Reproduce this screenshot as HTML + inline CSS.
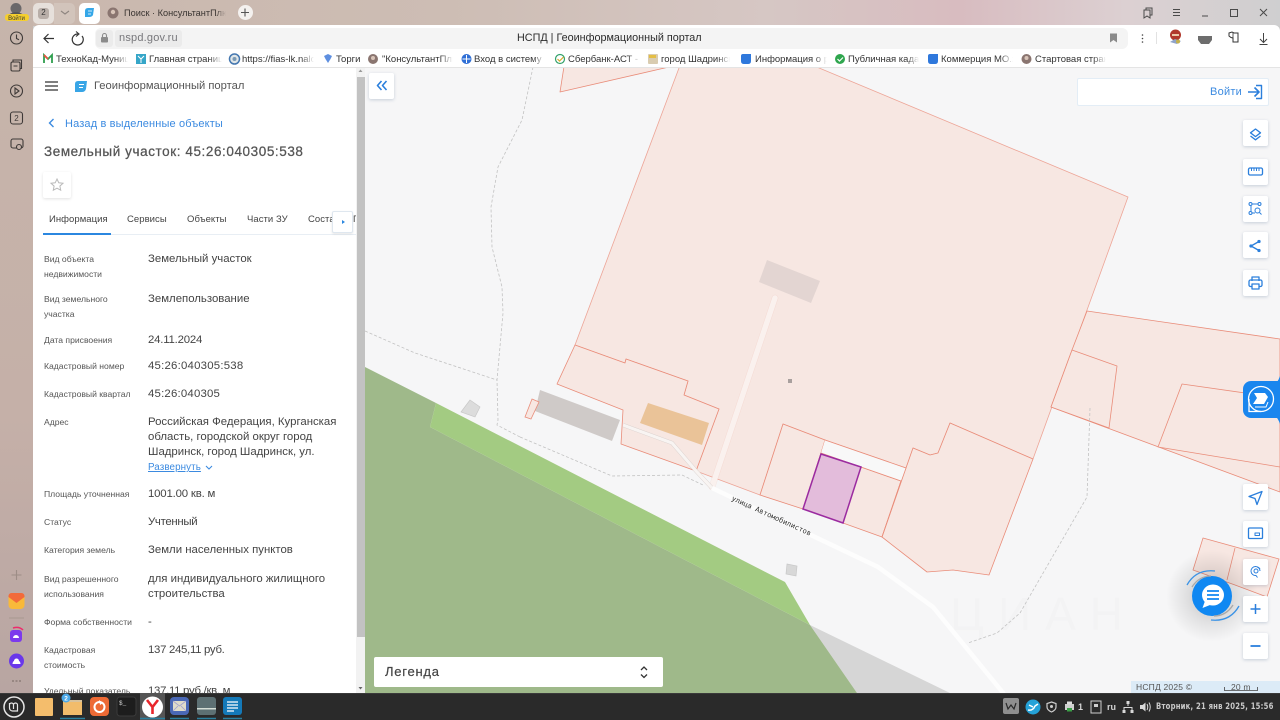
<!DOCTYPE html>
<html lang="ru"><head><meta charset="utf-8"><title>НСПД</title>
<style>
html,body{margin:0;padding:0;width:1280px;height:720px;overflow:hidden;background:#ccc}
body{font-family:"Liberation Sans","DejaVu Sans",sans-serif;position:relative}
div{box-sizing:border-box}
.a{position:absolute}
.t{position:absolute;white-space:nowrap;line-height:14px;height:14px}
.bm{font-size:9.5px;color:#333;overflow:hidden;-webkit-mask-image:linear-gradient(90deg,#000 82%,transparent);mask-image:linear-gradient(90deg,#000 82%,transparent)}
.l{font-size:8.6px;color:#555;letter-spacing:0}
.v{font-size:11.4px;color:#444;letter-spacing:0;left:148px}
.tab{font-size:9.5px;color:#444;letter-spacing:.05px}
.btn{position:absolute;left:1243px;width:25px;height:26px;background:#fff;border-radius:2px;box-shadow:0 1px 3px rgba(60,90,130,.25)}
svg{position:absolute;left:0;top:0}
</style></head><body>
<!-- chrome bg -->
<div class="a" style="left:0;top:0;width:1280px;height:26px;background:linear-gradient(90deg,#c9b7ad 0,#cdbdb4 35%,#d6c7c4 60%,#d8bcc0 75%,#dcd0d2 88%,#cfcfd0 100%)"></div>
<div class="a" style="left:0;top:0;width:33px;height:693px;background:linear-gradient(180deg,#c6b5ab 0,#c5b0a8 60%,#b8a5a2 100%)"></div>
<div class="a" style="left:33px;top:25px;width:1247px;height:43px;background:#fff;border-radius:6px 6px 0 0"></div>
<div class="a" style="left:95px;top:28px;width:1033px;height:21px;background:#f4f4f4;border-radius:6px"></div>
<div class="a" style="left:96px;top:30px;width:17px;height:17px;background:#ebebeb;border-radius:3px"></div>
<div class="a" style="left:115px;top:30px;width:67px;height:17px;background:#ebebeb;border-radius:3px"></div>
<div class="a" style="left:33px;top:67px;width:1247px;height:1px;background:#e4e4e4"></div>

<!-- map -->
<svg width="1280" height="720" viewBox="0 0 1280 720" style="left:0;top:0">
<defs><clipPath id="m"><rect x="365" y="68" width="915" height="625"/></clipPath>
<radialGradient id="sh"><stop offset="0" stop-color="#000" stop-opacity=".22"/><stop offset=".6" stop-color="#000" stop-opacity=".08"/><stop offset="1" stop-color="#000" stop-opacity="0"/></radialGradient></defs>
<g clip-path="url(#m)">
<rect x="365" y="68" width="915" height="625" fill="#f6f6f7"/>
<text x="950" y="630" font-family="'Liberation Sans',sans-serif" font-size="46" letter-spacing="14" fill="#f3f3f4">ЦИАН</text>
<polygon points="810,625 950,693 857,693" fill="#d6d6d6"/>
<polygon points="365,367 436,403 430,427 810,625 857,693 365,693" fill="#9fb98a"/>
<polygon points="436,403 785,582 810,625 430,427" fill="#a3cb82"/>
<g fill="#f7e7e2" stroke="#e98c79" stroke-width=".8" stroke-linejoin="round">
<polygon points="565,60 560,92 682,64"/>
<polygon points="682,60 800,60 1128,197 1033,459 950,423 938,453 930,455 913,448 906,468 825,440 783,424 760,495 696,471 719,409 684,395 688,381 626,359 625,363 575,345" stroke="#eda597" />
<polygon points="575,345 625,363 626,359 688,381 684,395 719,409 696,471 621,444 623,410 557,384"/>
<polygon points="783,424 825,440 821,453 803,509 760,495"/>
<polygon points="821,453 901,481 882,537 843,523 803,509"/>
<polygon points="1087,311 1280,339 1280,492 1051,407 1072,350"/>
<polygon points="1072,350 1117,366 1109,428 1051,407"/>
<polygon points="1182,384 1280,398 1280,467 1158,447"/>
<polygon points="913,448 930,455 938,453 950,423 1033,459 989,575 953,570 927,572 882,537 901,481 906,468"/>
<polygon points="1203,538 1279,559 1267,597 1235,585 1193,570"/>
<line x1="1235" y1="548" x2="1227" y2="580"/>
</g>
<polygon points="825,440 906,468 901,481 821,453" fill="#f8f8f8"/>
<polyline points="825,440 906,468" fill="none" stroke="#e98c79" stroke-width=".8"/>
<polyline points="821,453 901,481" fill="none" stroke="#e98c79" stroke-width=".8"/>
<line x1="906" y1="468" x2="882" y2="537" stroke="#e98c79" stroke-width=".8"/>
<!-- roads -->
<polyline points="775,298 712,487" fill="none" stroke="#e9a99c" stroke-width="6.500" stroke-opacity=".2" stroke-linecap="round"/>
<polyline points="775,298 712,487" fill="none" stroke="#faf1ee" stroke-width="5.500" stroke-linecap="round"/>
<polyline points="623,425 672,443 697,472 712,488" fill="none" stroke="#d8cfcc" stroke-width="4"/>
<polyline points="623,425 672,443 697,472 712,488" fill="none" stroke="#f8f4f2" stroke-width="3.200"/>
<polyline points="712,488 878,567 933,607 1004,694" fill="none" stroke="#fdfdfd" stroke-width="4.500"/>
<!-- buildings -->
<polygon points="540,390 620,420 612,441 535,411" fill="#cfcac8"/>
<polygon points="648,403 709,423 702,445 640,423" fill="#eac398"/>
<polygon points="767,260 820,281 811,303 759,282" fill="#e3d5d2"/>
<polygon points="470,400 480,407 475,417 461,412" fill="#dcdcdc" stroke="#c8c8c8" stroke-width=".7"/>
<polygon points="787,564 797,566 796,576 786,574" fill="#d8d8d8" stroke="#c8c8c8" stroke-width=".7"/>
<polygon points="532,399 539,402 531,419 525,417" fill="#f7e7e2" stroke="#e98c79" stroke-width=".8"/>
<rect x="788" y="379" width="4" height="4" fill="#a9a09e"/>
<!-- selected -->
<polygon points="821,454 861,467 843,523 803,509" fill="#e3bcdb" stroke="#9b2ba0" stroke-width="1.500"/>
<!-- dashed -->
<g fill="none" stroke="#c2c2c2" stroke-width=".8" stroke-dasharray="3 2">
<polyline points="533,67 522,120 498,167 491,207 492,247 502,287 503,313 497,380 498,420 497,425 520,437"/>
<polyline points="365,331 415,353 497,380"/>
<polyline points="520,437 612,476 682,475 703,485"/>
<polyline points="1090,408 1087,497 1020,613 997,633 968,643"/>
</g>
<text x="0" y="0" transform="translate(731,500) rotate(24.5)" font-family="'DejaVu Sans Mono',monospace" font-size="7.200" fill="#333">улица Автомобилистов</text>
<circle cx="1212" cy="596" r="46" fill="url(#sh)"/>
<rect x="1131" y="681" width="149" height="12" fill="#dcebf7"/>
</g>
</svg>

<!-- panel -->
<div class="a" style="left:33px;top:68px;width:323px;height:625px;background:#fff"></div>
<div class="a" style="left:356px;top:68px;width:9px;height:625px;background:#f2f2f2"></div>
<div class="a" style="left:357px;top:77px;width:8px;height:560px;background:#c2c2c2"></div>
<div class="a" style="left:43px;top:234px;width:313px;height:1px;background:#e8eef4"></div>
<div class="a" style="left:43px;top:233px;width:68px;height:2px;background:#2b87e0"></div>
<div class="a" style="left:43px;top:172px;width:28px;height:26px;background:#fff;box-shadow:0 1px 3px rgba(0,0,0,.12);border-radius:2px"></div>

<div class="t" style="left:94px;top:79px;font-size:11.200px;color:#555;letter-spacing:0">Геоинформационный портал</div>
<div class="t" style="left:65px;top:117px;font-size:11px;color:#3b8ae0;letter-spacing:.15px">Назад в выделенные объекты</div>
<div class="t" style="left:44px;top:145px;font-size:13.500px;color:#555;letter-spacing:.58px;-webkit-text-stroke:.25px #555">Земельный участок: 45:26:040305:538</div>
<div class="t tab" style="left:49px;top:213px">Информация</div>
<div class="t tab" style="left:127px;top:213px">Сервисы</div>
<div class="t tab" style="left:187px;top:213px">Объекты</div>
<div class="t tab" style="left:247px;top:213px">Части ЗУ</div>
<div class="t tab" style="left:308px;top:213px;width:24px;overflow:hidden">Состав</div>
<div class="t tab" style="left:353px;top:213px;width:3px;overflow:hidden">П</div>
<div class="a" style="left:332px;top:211px;width:21px;height:22px;background:#fff;border:1px solid #dfe7ef;border-radius:2px;box-shadow:0 1px 2px rgba(0,0,0,.1)"></div>

<div class="t l" style="left:44px;top:252px">Вид объекта</div>
<div class="t l" style="left:44px;top:267px">недвижимости</div>
<div class="t l" style="left:44px;top:292px">Вид земельного</div>
<div class="t l" style="left:44px;top:307px">участка</div>
<div class="t l" style="left:44px;top:333px">Дата присвоения</div>
<div class="t l" style="left:44px;top:359px">Кадастровый номер</div>
<div class="t l" style="left:44px;top:387px">Кадастровый квартал</div>
<div class="t l" style="left:44px;top:415px">Адрес</div>
<div class="t l" style="left:44px;top:487px">Площадь уточненная</div>
<div class="t l" style="left:44px;top:515px">Статус</div>
<div class="t l" style="left:44px;top:543px">Категория земель</div>
<div class="t l" style="left:44px;top:572px">Вид разрешенного</div>
<div class="t l" style="left:44px;top:587px">использования</div>
<div class="t l" style="left:44px;top:615px">Форма собственности</div>
<div class="t l" style="left:44px;top:643px">Кадастровая</div>
<div class="t l" style="left:44px;top:658px">стоимость</div>
<div class="t l" style="left:44px;top:684px">Удельный показатель</div>

<div class="t v" style="top:252px">Земельный участок</div>
<div class="t v" style="top:292px">Землепользование</div>
<div class="t v" style="top:333px;letter-spacing:-.2px">24.11.2024</div>
<div class="t v" style="top:359px;letter-spacing:.22px">45:26:040305:538</div>
<div class="t v" style="top:387px;letter-spacing:.2px">45:26:040305</div>
<div class="t v" style="top:415px">Российская Федерация, Курганская</div>
<div class="t v" style="top:430px">область, городской округ город</div>
<div class="t v" style="top:445px">Шадринск, город Шадринск, ул.</div>
<div class="t" style="left:148px;top:461px;font-size:9.800px;color:#3b8ae0;text-decoration:underline;letter-spacing:.1px">Развернуть</div>
<div class="t v" style="top:487px;letter-spacing:-.18px">1001.00 кв. м</div>
<div class="t v" style="top:515px;letter-spacing:-.3px">Учтенный</div>
<div class="t v" style="top:543px">Земли населенных пунктов</div>
<div class="t v" style="top:572px">для индивидуального жилищного</div>
<div class="t v" style="top:587px">строительства</div>
<div class="t v" style="top:615px">-</div>
<div class="t v" style="top:643px;letter-spacing:-.3px">137 245,11 руб.</div>
<div class="t v" style="top:684px;letter-spacing:-.3px">137,11 руб./кв. м</div>

<!-- map overlays -->
<div class="a" style="left:369px;top:73px;width:25px;height:26px;background:#fff;border-radius:2px;box-shadow:0 1px 3px rgba(60,90,130,.25)"></div>
<div class="a" style="left:1077px;top:78px;width:192px;height:28px;background:#fff;border:1px solid #e3edf6;border-radius:2px"></div>
<div class="t" style="left:1210px;top:85px;font-size:11px;color:#3b8ae0;letter-spacing:.25px">Войти</div>
<div class="btn" style="top:120px"></div><div class="btn" style="top:159px"></div><div class="btn" style="top:196px"></div><div class="btn" style="top:232px"></div><div class="btn" style="top:270px"></div>
<div class="btn" style="top:484px"></div><div class="btn" style="top:521px"></div><div class="btn" style="top:559px"></div><div class="btn" style="top:596px"></div><div class="btn" style="top:633px"></div>
<div class="a" style="left:374px;top:657px;width:289px;height:30px;background:#fff;border-radius:2px"></div>
<div class="t" style="left:385px;top:665px;font-size:13px;color:#444;letter-spacing:.75px;-webkit-text-stroke:.2px #444">Легенда</div>
<div class="a" style="left:1243px;top:381px;width:37px;height:37px;background:#1a86ee;border-radius:8px 0 0 8px"></div>
<div class="a" style="left:1192px;top:576px;width:40px;height:40px;background:#1088f2;border-radius:50%"></div>
<div class="t" style="left:1136px;top:680px;font-size:8.500px;color:#555;letter-spacing:.2px">НСПД 2025 ©</div>
<div class="t" style="left:1231px;top:680px;font-size:8.500px;color:#555;letter-spacing:.2px">20 m</div>

<!-- tabs / toolbar text -->
<div class="a" style="left:33px;top:3px;width:21px;height:21px;background:#e6e0db;border-radius:5px"></div>
<div class="a" style="left:54px;top:3px;width:21px;height:21px;background:#d2c4bb;border-radius:0 5px 5px 0"></div>
<div class="a" style="left:79px;top:3px;width:21px;height:21px;background:#fff;border-radius:5px"></div>
<div class="a" style="left:238px;top:5px;width:15px;height:15px;background:#f4f1ef;border-radius:50%"></div>
<div class="a" style="left:38px;top:8px;width:11px;height:11px;background:#b8aea8;border-radius:3px"></div>
<div class="t" style="left:38px;top:6px;width:11px;text-align:center;font-size:8px;color:#333">2</div>
<div class="t" style="left:124px;top:6px;width:102px;font-size:9.200px;color:#3a3532;letter-spacing:0;overflow:hidden;-webkit-mask-image:linear-gradient(90deg,#000 90%,transparent);mask-image:linear-gradient(90deg,#000 90%,transparent)">Поиск · КонсультантПлюс</div>
<div class="t" style="left:119px;top:31px;font-size:11px;color:#77777b;letter-spacing:.2px">nspd.gov.ru</div>
<div class="t" style="left:517px;top:31px;font-size:10.800px;color:#2c2c2c;letter-spacing:0">НСПД | Геоинформационный портал</div>

<div class="t bm" style="left:56px;top:53px;width:72px">ТехноКад-Муниципальный</div>
<div class="t bm" style="left:149px;top:53px;width:73px">Главная страница сайта</div>
<div class="t bm" style="left:242px;top:53px;width:72px">https://fias-lk.nalog.ru</div>
<div class="t bm" style="left:336px;top:53px;width:26px;-webkit-mask-image:none;mask-image:none">Торги</div>
<div class="t bm" style="left:382px;top:53px;width:71px">"КонсультантПлюс"</div>
<div class="t bm" style="left:474px;top:53px;width:71px">Вход в систему :: Портал</div>
<div class="t bm" style="left:568px;top:53px;width:72px">Сбербанк-АСТ - Электрон</div>
<div class="t bm" style="left:661px;top:53px;width:69px">город Шадринск Курган</div>
<div class="t bm" style="left:755px;top:53px;width:72px">Информация о рынке</div>
<div class="t bm" style="left:848px;top:53px;width:71px">Публичная кадастровая</div>
<div class="t bm" style="left:941px;top:53px;width:72px">Коммерция МО.xlsx файл</div>
<div class="t bm" style="left:1035px;top:53px;width:71px">Стартовая страница</div>

<!-- taskbar -->
<div class="a" style="left:0;top:693px;width:1280px;height:27px;background:#2a2a2a;border-top:1px solid #3a3a3a"></div>
<div class="t" style="left:1156px;top:700px;font-size:8.600px;color:#c9c9c9;letter-spacing:.26px;font-family:'DejaVu Sans',sans-serif;font-weight:bold;transform-origin:left;transform:scaleX(.8)">Вторник, 21 янв 2025, 15:56</div>
<div class="t" style="left:1107px;top:700px;font-size:9px;color:#d5d5d5;font-weight:bold">ru</div>
<div class="t" style="left:1078px;top:700px;font-size:9px;color:#d5d5d5;font-weight:bold">1</div>

<!-- icons overlay -->
<svg width="1280" height="720" viewBox="0 0 1280 720" fill="none">
<!-- profile -->
<circle cx="16" cy="8.500" r="5.500" fill="#6a686a"/><path d="M8 16c2-5 14-5 16 0z" fill="#555"/>
<rect x="5" y="14" width="24" height="7" rx="3" fill="#f5cf2e"/>
<text x="16.500" y="20" font-family="Liberation Sans" font-size="6" fill="#333" text-anchor="middle">Войти</text>
<!-- rail icons -->
<g stroke="#3f3a38" stroke-width="1.100">
<circle cx="16.500" cy="38" r="6"/><path d="M16.500 34.500v4l2.500 1.200"/>
<rect x="11" y="62" width="9" height="9" rx="1.500"/><path d="M13 62v-2h8.500v8.500h-1.500M13.500 66h4"/>
<circle cx="16.500" cy="91" r="6"/><path d="M15 88l4 3-4 3z"/>
<rect x="10.500" y="112" width="12" height="12" rx="2.500"/>
<rect x="11" y="139" width="12" height="9" rx="2"/><circle cx="19" cy="147" r="2.500" fill="#c5b2a9"/>
</g>
<text x="16.500" y="121" font-family="Liberation Sans" font-size="8" fill="#3f3a38" text-anchor="middle">2</text>
<path d="M16.500 570v10M11.500 575h10" stroke="#9d8d86" stroke-width="1.100"/>
<rect x="8.500" y="593" width="16" height="16" rx="4" fill="#f9b93a"/><path d="M8.500 597l8 6 8-6v-1a3 3 0 0 0-3-3h-10a3 3 0 0 0-3 3z" fill="#f26a3a"/>
<line x1="9" y1="618" x2="24" y2="618" stroke="#a89790"/>
<rect x="10" y="630" width="12" height="12" rx="3" fill="#7c3aed"/><path d="M13 638a3 3 0 0 1 6 0z" fill="#fff"/><path d="M13 628q6-2 10 2" stroke="#ee2b6c" stroke-width="1.500"/>
<circle cx="16.500" cy="661" r="7.500" fill="#6a38ea"/><path d="M12.500 664a4 4 0 0 1 8 0z" fill="#fff"/><circle cx="16.500" cy="661" r="2.500" fill="#fff"/>
<path d="M12 681h2M15.500 681h2M19 681h2" stroke="#8c7d77" stroke-width="1.500"/>
<!-- tabs -->
<path d="M61 11l4 3 4-3" stroke="#8e8580" stroke-width="1.100"/>
<path d="M85 11q0-3 3-3h6l-1 7q-1 2-4 2h-4z" fill="#35a7e8"/><path d="M88 11h4M88 14h3" stroke="#fff" stroke-width=".8"/>
<circle cx="113" cy="13" r="5.500" fill="#8a7570"/><circle cx="113" cy="12" r="2.200" fill="#d8c4b8"/>
<path d="M245 8.500v8M241 12.500h8" stroke="#555" stroke-width="1.100"/>
<!-- window controls -->
<g stroke="#4a4a4a" stroke-width="1">
<path d="M1144 10h6v8l-3-2-3 2zM1146 10V8h6v7h-2"/>
<path d="M1173 9.500h7M1173 12.500h7M1173 15.500h7"/>
<path d="M1202 16h6"/>
<rect x="1230.500" y="9.500" width="7" height="7"/>
<path d="M1260 9l7 7M1267 9l-7 7"/>
</g>
<!-- toolbar -->
<path d="M54 38.500h-9.500M48.500 34l-4.500 4.500 4.500 4.500" stroke="#333" stroke-width="1.200"/>
<path d="M82 36a5.500 5.500 0 1 1-4-2" stroke="#333" stroke-width="1.200"/><path d="M76 31.500l3 2.500-3 2.500" stroke="#333" stroke-width="1.100"/>
<rect x="101" y="37" width="7" height="5.500" rx="1" fill="#8b8b8b"/><path d="M102.500 37v-1.500a2 2 0 0 1 4 0V37" stroke="#8b8b8b" stroke-width="1.100"/>
<path d="M1110 33.500h7v9l-3.500-2.500-3.500 2.500z" fill="#8a8a8a"/>
<circle cx="1142.500" cy="35" r=".8" fill="#444"/><circle cx="1142.500" cy="38.500" r=".8" fill="#444"/><circle cx="1142.500" cy="42" r=".8" fill="#444"/>
<line x1="1156.500" y1="32" x2="1156.500" y2="44" stroke="#e2e2e2"/>
<circle cx="1175.500" cy="35" r="5.500" fill="#b0392c"/><rect x="1172" y="34" width="7" height="2" fill="#e9c8a8"/><path d="M1170 42l5-3 6 2-4 3z" fill="#8fa3c9"/><circle cx="1178" cy="41.500" r="2" fill="#c4b04c"/>
<path d="M1198 36h14v4l-3 4h-8l-3-4z" fill="#6d6d6d"/>
<path d="M1229 33l3-1 2 1 4 0v9h-5v-4l-2-.500-2-1.500z" stroke="#333" stroke-width="1"/><path d="M1233 33v9" stroke="#333" stroke-width=".8"/>
<path d="M1263.500 33v9M1260 39l3.500 3.500 3.500-3.500M1259.500 44.500h8" stroke="#444" stroke-width="1"/>

<!-- bookmark favicons -->
<path d="M44 63v-8l4 4 4-4v8" stroke="#2f9f4f" stroke-width="1.800"/><path d="M44 55l4 4" stroke="#e8533f" stroke-width="1.800"/>
<rect x="136" y="54" width="10" height="10" fill="#36a6c8"/><path d="M138 56l3 3 3-3M141 59v4" stroke="#fff"/>
<circle cx="234.500" cy="59" r="5" stroke="#4477b0" stroke-width="1.500" fill="#e0e6e8"/><circle cx="234.500" cy="59" r="2" fill="#7a9ab5"/>
<path d="M324 56l4-2 4 2-1.500 3-2.500 4-2.500-4z" fill="#5e8fe0"/>
<circle cx="373" cy="59" r="5" fill="#8a7570"/><circle cx="373" cy="58" r="2" fill="#d8c4b8"/>
<circle cx="466.500" cy="59" r="5" fill="#2f6fd6"/><path d="M466.500 55v8M462.500 59h8" stroke="#fff" stroke-width="1"/>
<circle cx="560" cy="59" r="4.500" stroke="#33a26b" stroke-width="1.200" fill="#fff"/><path d="M557.500 59l2 2 4-4" stroke="#d9a92a" stroke-width="1.200"/>
<rect x="648" y="54" width="10" height="10" rx="1" fill="#d9ccb0"/><rect x="649" y="55" width="7" height="3" fill="#e4be45"/>
<path d="M741 56q0-2 2-2h8v7q0 3-3 3h-4q-3 0-3-3z" fill="#2f78dc"/>
<circle cx="840" cy="59" r="5" fill="#2fa64e"/><path d="M837.500 59l2 2 3.500-3.500" stroke="#fff" stroke-width="1.200"/>
<path d="M928 56q0-2 2-2h8v7q0 3-3 3h-4q-3 0-3-3z" fill="#2f78dc"/>
<circle cx="1026.500" cy="59" r="5" fill="#8a7570"/><circle cx="1026.500" cy="58" r="2" fill="#d8c4b8"/>

<!-- panel header -->
<path d="M45 82h13M45 86h13M45 90h13" stroke="#333" stroke-width="1.300"/>
<path d="M75 84q0-3 3-3h9l-1 8q-1 3-4 3h-7z" fill="#38a5e6"/><path d="M79 84.500h5M79 87.500h4" stroke="#fff" stroke-width=".9"/>
<path d="M53.500 119l-4 4 4 4" stroke="#3b8ae0" stroke-width="1.400"/>
<path d="M57 179l1.800 3.800 4.200.5-3.100 2.800.8 4.100-3.700-2-3.700 2 .8-4.100-3.100-2.800 4.200-.5z" stroke="#b9b9b9" stroke-width="1"/>
<path d="M342 220l3 2-3 2z" fill="#2b87e0"/>
<path d="M206 466l3 3 3-3" stroke="#3b8ae0" stroke-width="1.100"/>
<path d="M358.500 72l2-2.500 2 2.500z" fill="#999"/><path d="M358.500 687l2 2.500 2-2.500z" fill="#666"/>

<!-- map buttons -->
<g stroke="#2b7fdc" stroke-width="1.300" stroke-linejoin="round">
<path d="M381.500 81l-4 4.500 4 4.500M386.500 81l-4 4.500 4 4.500" stroke-width="1.600"/>
<path d="M1248 92h11M1254.500 87.500l4.500 4.500-4.500 4.500" stroke-width="1.600"/><path d="M1256 85.500h5.500v13h-5.500" stroke-width="1.400"/>
<!-- layers -->
<path d="M1255.500 129l5 3.800-5 3.800-5-3.800z"/><path d="M1250.500 136l5 3.800 5-3.800"/>
<!-- ruler -->
<rect x="1248.500" y="168" width="14" height="7" rx="1.500"/><path d="M1251.500 168v3M1254 168v3M1256.500 168v3M1259 168v3" stroke-width="1"/>
<!-- area -->
<path d="M1252 204h6M1251 206v5M1252 213h3" stroke-width="1"/><circle cx="1250.500" cy="204" r="1.500" stroke-width="1"/><circle cx="1259.500" cy="204" r="1.500" stroke-width="1"/><circle cx="1250.500" cy="213" r="1.500" stroke-width="1"/><circle cx="1257.500" cy="210.500" r="2.500" stroke-width="1"/><path d="M1259.500 212.500l2 2" stroke-width="1"/>
<!-- share -->
<path d="M1259 241.500l-8 4.500 8 4.500"/><circle cx="1259" cy="241.500" r="1" fill="#2b7fdc"/><circle cx="1251" cy="246" r="1" fill="#2b7fdc"/><circle cx="1259" cy="250.500" r="1" fill="#2b7fdc"/>
<!-- print -->
<path d="M1252 281v-4h7v4"/><rect x="1249" y="280" width="13" height="6.500" rx="1.500"/><rect x="1252" y="284" width="7" height="5" fill="#fff"/>
<!-- navigate -->
<path d="M1262 491.500l-13 5 6 2 2 6z"/>
<!-- pip -->
<rect x="1248.500" y="528" width="14" height="10.500" rx="1"/><rect x="1255" y="533" width="4.500" height="2.500" stroke-width="1"/>
<!-- geo -->
<circle cx="1256" cy="571" r="2" stroke-width="1"/><path d="M1260 571a4.500 4.500 0 1 0-4 4.500l1.500 2" stroke-width="1"/><path d="M1257 567a4 4 0 0 1 3 2" stroke-width="1"/>
<!-- +/- -->
<path d="M1255.500 604v10M1250.500 609h10" stroke-width="1.500"/>
<path d="M1250.500 646h10" stroke-width="1.800"/>
</g>
<!-- legend chevrons -->
<path d="M641 670l3-3 3 3M641 674.500l3 3 3-3" stroke="#333" stroke-width="1.300"/>
<!-- speech badge -->
<circle cx="1261" cy="399" r="12.500" stroke="#fff" stroke-width="1.300"/>
<path d="M1249 399v12.500h12" stroke="#fff" stroke-width="1.300"/>
<path d="M1254 393h11l3 4-4 7h-11l4-6z" fill="#fff"/><path d="M1255 407h11l2-5" stroke="#fff" stroke-width="1"/>
<path d="M1280 376v8h-5q3-2 5-8zM1280 424v-8h-5q3 2 5 8z" fill="#1a86ee"/>
<!-- chat -->
<path d="M1187 585q9-16 28-14" stroke="#3b93e6" stroke-width="1.300"/><path d="M1192 587q7-11 19-11" stroke="#a9a9a9" stroke-width="1.300"/>
<path d="M1239 606q-9 16-28 14" stroke="#3b93e6" stroke-width="1.300"/><path d="M1233 605q-7 11-19 11" stroke="#a9a9a9" stroke-width="1.300"/>
<ellipse cx="1213" cy="595" rx="11" ry="10.500" fill="#fff"/><path d="M1205 601l-2.500 7 7.500-3z" fill="#fff"/>
<path d="M1207 591h12M1207 595h12M1207 599h12" stroke="#1088f2" stroke-width="1.800"/>
<!-- scale -->
<path d="M1224.500 687v3.500h33v-3.500" stroke="#444" stroke-width=".8"/>
<!-- taskbar icons -->
<circle cx="14" cy="707" r="10" stroke="#e6e6e6" stroke-width="1.500" fill="#2a2a2a"/><path d="M9.500 703v5a3 3 0 0 0 3 3h5v-6a2 2 0 0 0-4 0v4M13.500 705a2 2 0 0 0-4 0" stroke="#e6e6e6" stroke-width="1.200"/>
<rect x="35" y="698" width="18" height="18" rx="1" fill="#f4bd6c"/>
<path d="M63 699h6l2 2h11v14H63z" fill="#f2bc6b"/><rect x="63" y="700" width="19" height="2" fill="#d9c29b"/>
<circle cx="66" cy="698" r="4.500" fill="#4aa8e8"/><text x="66" y="700.500" font-family="Liberation Sans" font-size="6.500" fill="#fff" text-anchor="middle" font-weight="bold">2</text>
<rect x="90" y="697" width="19" height="19" rx="4" fill="#ed6a35"/><circle cx="99.500" cy="707" r="5" stroke="#fff" stroke-width="2"/><path d="M99 700l4 3-3 2" fill="#fff"/>
<rect x="117" y="697" width="19" height="19" rx="3" fill="#1d1d1d" stroke="#3a3a3a"/><text x="119" y="705" font-family="Liberation Mono" font-size="6" fill="#ddd">$_</text>
<rect x="140" y="693" width="25" height="27" fill="#555"/><circle cx="152.500" cy="707" r="10.500" fill="#fff"/><path d="M147 700l5.500 7 5.500-7M152.500 707v7" stroke="#e8262b" stroke-width="2.600"/>
<rect x="170" y="697" width="19" height="18" rx="4" fill="#4a68b5"/><rect x="173" y="701" width="13" height="10" fill="#e0dcc9"/><path d="M173 701l6.500 5 6.500-5M173 711l5-5M186 711l-5-5" stroke="#a0a0d0" stroke-width=".8"/>
<rect x="197" y="697" width="19" height="18" rx="3" fill="#5d7073"/><rect x="197" y="708" width="19" height="1.500" fill="#d4ddd5"/>
<rect x="223" y="697" width="19" height="18" rx="3" fill="#1479b8"/><path d="M227 702h11M227 705h11M227 708h11M227 711h7" stroke="#fff" stroke-width="1.200"/>
<path d="M60 718.500h25M140 718.500h25M170 718.500h19M197 718.500h19M223 718.500h19" stroke="#2a7f9e" stroke-width="1.500"/>
<rect x="1003" y="698" width="16" height="16" rx="2" fill="#8f8f8f"/><path d="M1006 703l2 6 3-4 3 4 2-6" stroke="#2a2a2a" stroke-width="1.200"/>
<circle cx="1033" cy="707" r="7.500" fill="#25a2d8"/><path d="M1028 710q5 1 7-4l3-2M1029 705l4 2" stroke="#fff" stroke-width="1.500"/>
<path d="M1051.500 702l4.500 1.500v3.500q0 3-4.500 5-4.500-2-4.500-5v-3.500z" stroke="#cfcfcf" stroke-width="1.200"/><circle cx="1051.500" cy="706.500" r="1.500" fill="#cfcfcf"/>
<rect x="1065" y="704" width="9" height="6" fill="#cfcfcf"/><rect x="1067" y="701.500" width="5" height="3" fill="#dcdcdc"/><rect x="1067" y="708" width="5" height="3.500" fill="#3aa047"/>
<rect x="1091" y="701" width="10" height="12" stroke="#cfcfcf"/><rect x="1094" y="704" width="4" height="3" fill="#cfcfcf"/>
<path d="M1128 703v3M1124 710v-2.500h8v2.500" stroke="#d8d8d8"/><rect x="1126.500" y="701" width="3" height="3" fill="#d8d8d8"/><rect x="1122.500" y="710" width="3" height="3" fill="#d8d8d8"/><rect x="1130.500" y="710" width="3" height="3" fill="#d8d8d8"/>
<path d="M1140 705h2.500l3-2.500v9l-3-2.500H1140z" fill="#d8d8d8"/><path d="M1147 704q1.500 3 0 6M1149 702.500q2.500 4.500 0 9" stroke="#d8d8d8"/>
</svg>
</body></html>
